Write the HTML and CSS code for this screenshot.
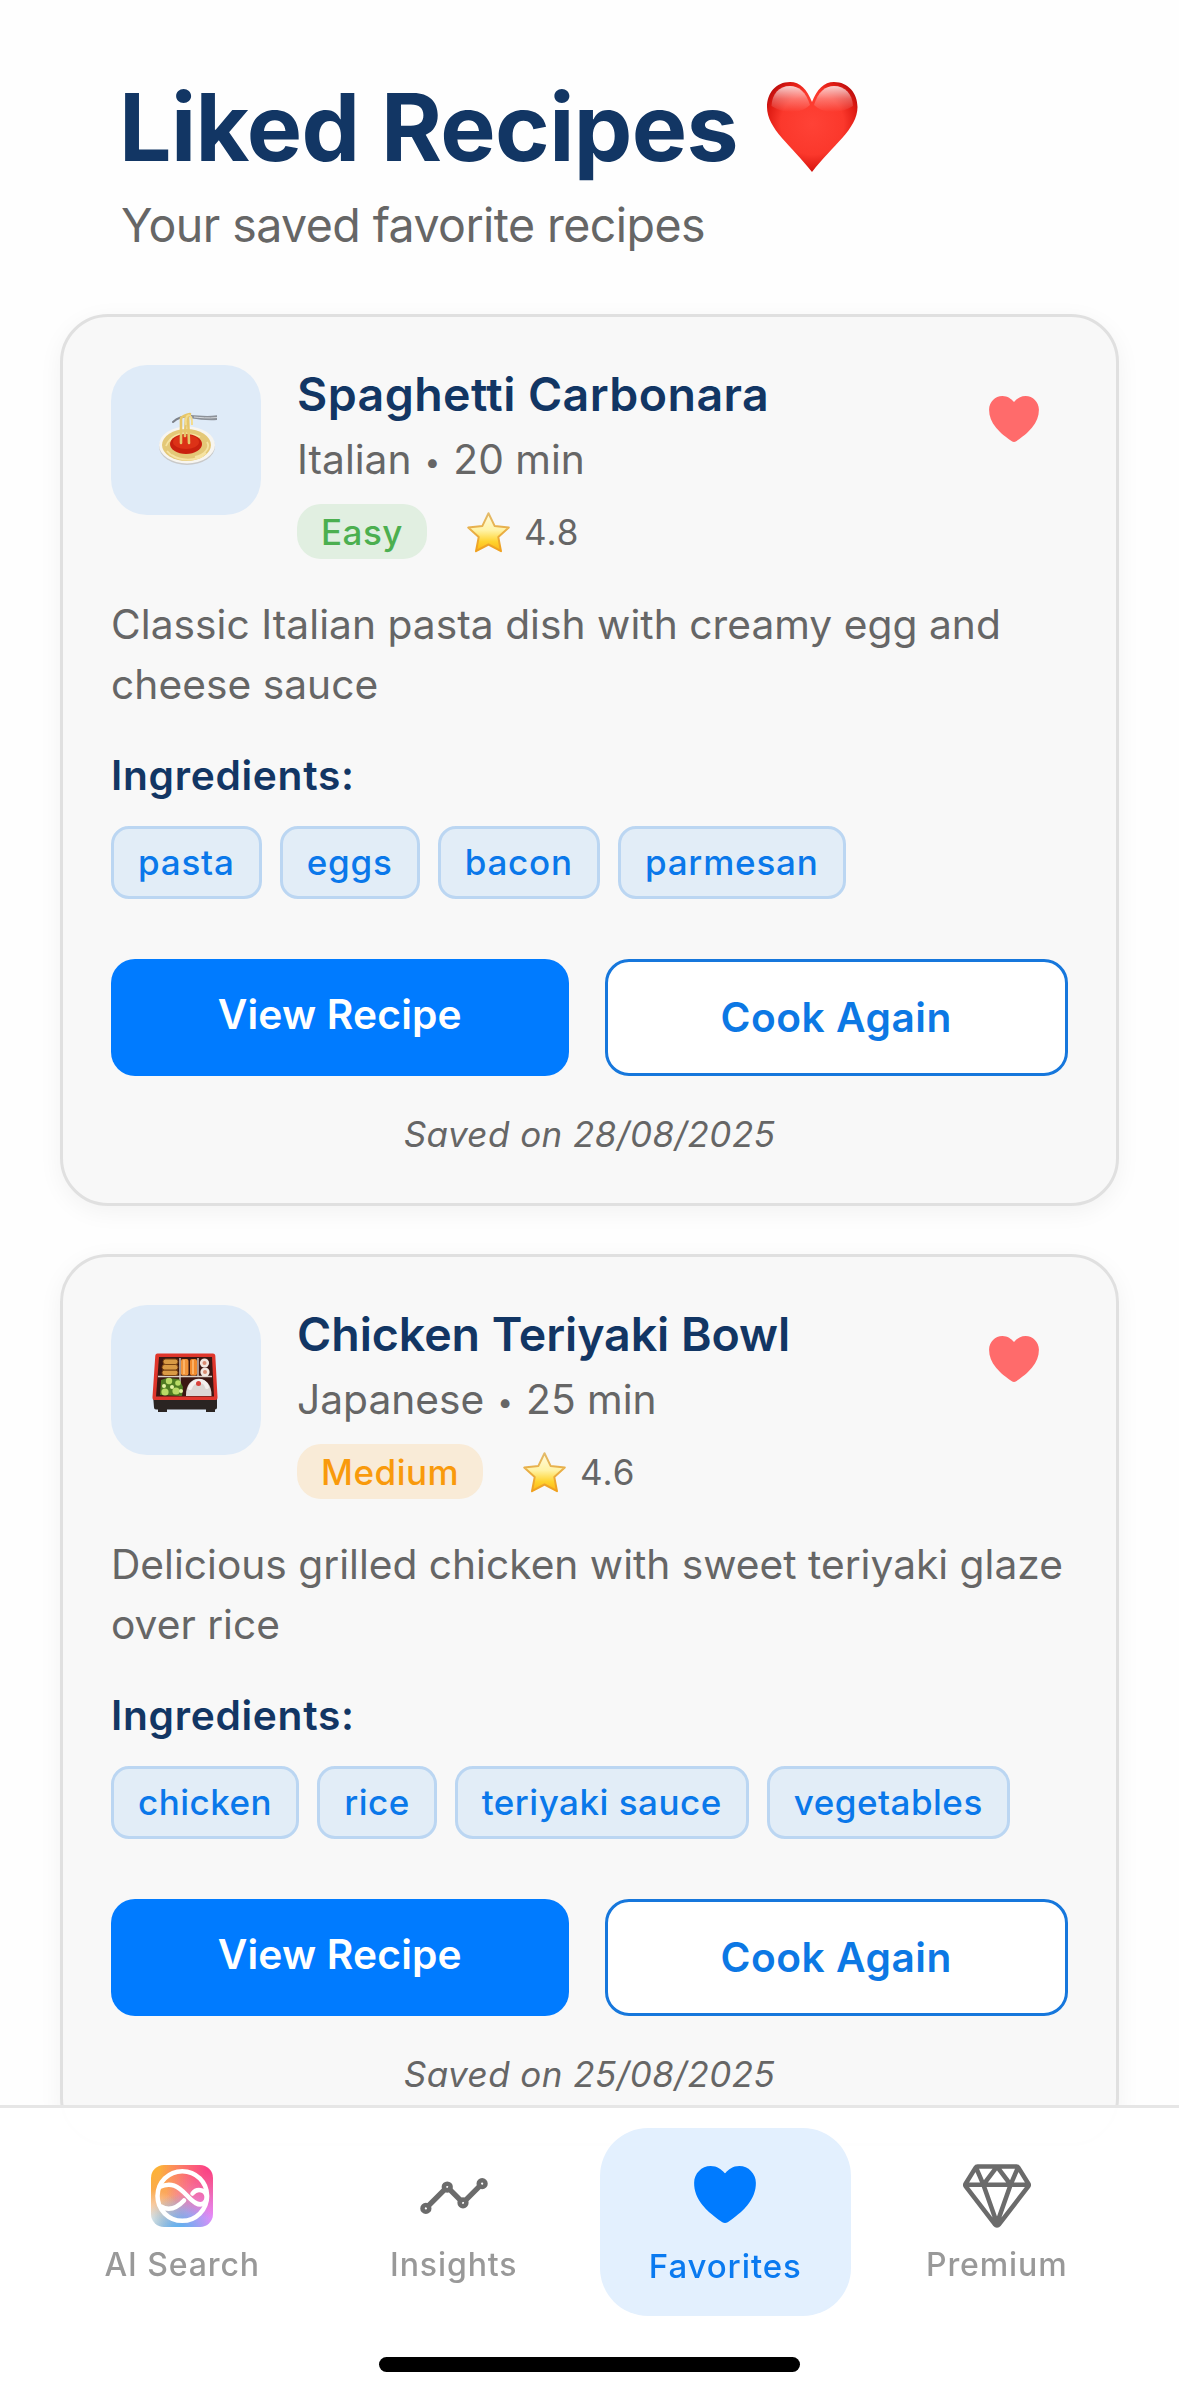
FILE: index.html
```html
<!DOCTYPE html>
<html lang="en">
<head>
<meta charset="utf-8">
<title>Liked Recipes</title>
<link rel="stylesheet" href="styles.css">
</head>
<body>
<svg class="defs" aria-hidden="true">
  <defs>
    <linearGradient id="starFill" x1="0" y1="0" x2="0" y2="1">
      <stop offset="0" stop-color="#fffbe0"/>
      <stop offset=".45" stop-color="#fff3a6"/>
      <stop offset=".75" stop-color="#ffd32e"/>
      <stop offset="1" stop-color="#fdb515"/>
    </linearGradient>
    <linearGradient id="starEdge" x1="0" y1="0" x2="0" y2="1">
      <stop offset="0" stop-color="#e3bb6a"/>
      <stop offset="1" stop-color="#f0a01c"/>
    </linearGradient>
    <radialGradient id="heartFill" cx=".5" cy=".46" r=".58">
      <stop offset="0" stop-color="#ff4236"/>
      <stop offset=".6" stop-color="#fb382c"/>
      <stop offset=".85" stop-color="#e01c14"/>
      <stop offset="1" stop-color="#b90c0c"/>
    </radialGradient>
    <linearGradient id="heartShine" x1="0" y1="0" x2="0" y2="1">
      <stop offset="0" stop-color="#fff" stop-opacity=".8"/>
      <stop offset=".5" stop-color="#fff" stop-opacity=".3"/>
      <stop offset="1" stop-color="#fff" stop-opacity="0"/>
    </linearGradient>
    <symbol id="star" viewBox="0 0 45 43">
      <path d="M22.500 2.200 28.600 14.900 42.800 16.600 32.300 26.100 35 40.200 22.500 33.500 10 40.200 12.700 26.100 2.200 16.600 16.400 14.900Z" fill="url(#starFill)" stroke="url(#starEdge)" stroke-width="2" stroke-linejoin="round"/>
    </symbol>
    <symbol id="heart" viewBox="48 64 416 384">
      <path d="M256 448a32 32 0 01-18-5.570c-78.590-53.350-112.620-89.930-131.390-112.800-40-48.750-59.150-98.800-58.610-153C48.630 114.520 98.460 64 159.080 64c44.080 0 74.610 24.830 92.390 45.510a6 6 0 009.060 0C278.310 88.810 308.840 64 352.920 64c60.620 0 110.450 50.520 111.080 112.640.540 54.210-18.630 104.260-58.610 153-18.770 22.870-52.800 59.450-131.390 112.800a32 32 0 01-18 5.560z" fill="currentColor"/>
    </symbol>
  </defs>
</svg>

<header class="header">
  <h1 class="title"><span>Liked Recipes</span>
    <svg class="title-heart" viewBox="12 13 91 90">
      <path d="M57 33C52 20 45 13 35 13 21 13 12 24 12 38 12 60 37 77 57 103 77 77 102.500 60 102.500 38 102.500 24 93 13 79 13 69 13 62 20 57 33Z" fill="url(#heartFill)"/>
      <path d="M55 36C51 23 44 17 35 17 24 17 17 25 16.500 37 28 45 46 45 55 36Z" fill="url(#heartShine)"/>
      <path d="M59 36C63 23 70 17 79 17 90 17 97.500 25 98 37 86 45 68 45 59 36Z" fill="url(#heartShine)"/>
    </svg>
  </h1>
  <p class="subtitle">Your saved favorite recipes</p>
</header>

<main class="list">
  <article class="card">
    <div class="card-top">
      <div class="thumb">
        <svg class="food" viewBox="-4 0 80 80">
          <ellipse cx="37" cy="46.500" rx="28" ry="18.500" fill="#c9c9c9"/>
          <ellipse cx="37" cy="45" rx="28" ry="18.500" fill="#f7f5f0"/>
          <ellipse cx="36.500" cy="45" rx="24.500" ry="16" fill="#e4c877"/>
          <path d="M16 46c4-10 14-13 21-13M17 51c8 10 28 12 39 2M20 42c6-8 20-10 30-5M57 42c4 6-3 13-12 15M22 55c9 6 22 6 31 1" fill="none" stroke="#f6e3a1" stroke-width="1.800"/>
          <ellipse cx="36" cy="44" rx="16" ry="10" fill="#c9210f"/>
          <ellipse cx="36" cy="42" rx="13" ry="7" fill="#dc3217"/>
          <path d="M41 15c6 0 14 2 26 .3V20c-10 .6-18-.5-25-1.500z" fill="#8c9199"/>
          <path d="M44 17c6 .5 14 1.500 23 .5" stroke="#d4d7db" stroke-width="1" fill="none"/>
          <path d="M23 22c4-4 9-6 18-6" stroke="#7c818a" stroke-width="2" fill="none" stroke-linecap="round"/>
          <path d="M31 43V18M35 36l1-20M39 43l-1-27M31 18c2-2 4-3 9-4" stroke="#e6c669" stroke-width="2.600" fill="none" stroke-linecap="round"/>
          <path d="M36 25c-2-12 7-14 6 0" stroke="#f4dc8c" stroke-width="2" fill="none"/>
        </svg>
      </div>
      <div class="info">
        <h2 class="name">Spaghetti Carbonara</h2>
        <p class="meta">Italian <span class="dot">•</span> 20 min</p>
        <div class="stats">
          <span class="badge badge-easy">Easy</span>
          <span class="rating"><svg class="star"><use href="#star"/></svg>4.8</span>
        </div>
      </div>
      <svg class="like"><use href="#heart"/></svg>
    </div>
    <p class="desc">Classic Italian pasta dish with creamy egg and cheese sauce</p>
    <h3 class="label">Ingredients:</h3>
    <div class="chips">
      <span class="chip">pasta</span><span class="chip">eggs</span><span class="chip">bacon</span><span class="chip">parmesan</span>
    </div>
    <div class="actions">
      <a class="btn btn-primary">View Recipe</a>
      <a class="btn btn-outline">Cook Again</a>
    </div>
    <p class="saved">Saved on 28/08/2025</p>
  </article>

  <article class="card">
    <div class="card-top">
      <div class="thumb">
        <svg class="food" viewBox="1 0 80 80">
          <path d="M8 55h64v12.500a2 2 0 0 1-2 2V72h-9v-2.500H22V72h-9v-2.500h-2a2 2 0 0 1-2-2z" fill="#2a2422"/>
          <path d="M12.500 13.500h55.500q2 0 2.300 2L72.500 57q.2 3-2 3h-61q-2.200 0-2-3l2.800-41.500q.2-2 2.200-2z" fill="#df352b"/>
          <path d="M14 17h53l2 39.500H11z" fill="#3b1712"/>
          <path d="M35 18v38M13 36.500h54M53 18v18" stroke="#d9cfc6" stroke-width="1.400"/>
          <g fill="#d99a45" stroke="#7b4312" stroke-width="1">
            <rect x="17" y="30" width="16" height="5.500" rx="2.700"/>
            <rect x="17" y="24.500" width="16" height="5.500" rx="2.700"/>
            <rect x="18" y="19" width="15" height="5.500" rx="2.700"/>
          </g>
          <rect x="36" y="19" width="7.500" height="16.500" rx="2" fill="#f1933a"/>
          <rect x="45" y="19" width="7" height="16.500" rx="2" fill="#f08a2d"/>
          <path d="M39 20v14M48 20v14" stroke="#ffc078" stroke-width="1.500"/>
          <g fill="#f2e7df"><circle cx="59.500" cy="23" r="4.600"/><circle cx="60" cy="32" r="4.600"/></g>
          <g fill="#d98c72"><circle cx="59.500" cy="23" r="2"/><circle cx="60" cy="32" r="2"/></g>
          <path d="M15 55l1-15 6-2 12 1 4 8-1 9z" fill="#4f7d22"/>
          <g fill="#b9da66"><circle cx="24" cy="41" r="3.200"/><circle cx="20" cy="52" r="3.600"/><circle cx="31" cy="51" r="3.600"/><circle cx="33" cy="43" r="2.800"/></g>
          <g fill="#e4f2a2"><circle cx="19" cy="46" r="2"/><circle cx="27" cy="47" r="2"/><circle cx="36" cy="51" r="2"/></g>
          <path d="M41 56c-1-23 26.500-23 25.500 0z" fill="#dcd7d4"/>
          <path d="M45 48c3-9 15-9 17-1" stroke="#f4f1ef" stroke-width="4" fill="none" stroke-linecap="round"/>
          <circle cx="53.500" cy="43.500" r="2.500" fill="#d9423a"/>
        </svg>
      </div>
      <div class="info">
        <h2 class="name name-long">Chicken Teriyaki Bowl</h2>
        <p class="meta">Japanese <span class="dot">•</span> 25 min</p>
        <div class="stats">
          <span class="badge badge-medium">Medium</span>
          <span class="rating"><svg class="star"><use href="#star"/></svg>4.6</span>
        </div>
      </div>
      <svg class="like"><use href="#heart"/></svg>
    </div>
    <p class="desc desc-long">Delicious grilled chicken with sweet teriyaki glaze over rice</p>
    <h3 class="label">Ingredients:</h3>
    <div class="chips chips-long">
      <span class="chip">chicken</span><span class="chip">rice</span><span class="chip">teriyaki sauce</span><span class="chip">vegetables</span>
    </div>
    <div class="actions">
      <a class="btn btn-primary">View Recipe</a>
      <a class="btn btn-outline">Cook Again</a>
    </div>
    <p class="saved">Saved on 25/08/2025</p>
  </article>
</main>

<nav class="tabbar">
  <div class="tabs">
    <a class="tab">
      <span class="tab-icon"><span class="ai-tile">
        <svg class="ai-mark" viewBox="0 0 62 62" fill="none" stroke="#fff" stroke-width="4.500" stroke-linecap="round">
          <circle cx="31.300" cy="31" r="24.800"/>
          <path d="M8.500 22C20 16.500 27 21 36 30.500 42 37 48 42 53 38 58.500 33 55 25 48 25 45 25 43 26.500 41.500 28.500"/>
          <path d="M10 41.500C18 46 26 43 33 35.500"/>
        </svg>
      </span></span>
      <span class="tab-label">AI Search</span>
    </a>
    <a class="tab">
      <span class="tab-icon">
        <svg class="ico-insights" viewBox="16 128 480 256" fill="none" stroke="currentColor" stroke-width="32" stroke-linecap="round">
          <circle cx="456" cy="168" r="24"/><circle cx="320" cy="304" r="24"/><circle cx="208" cy="192" r="24"/><circle cx="56" cy="344" r="24"/>
          <path d="M339 285l98-98M225 209l78 78M75 325l114-114" stroke-width="38"/>
        </svg>
      </span>
      <span class="tab-label">Insights</span>
    </a>
    <a class="tab tab-active">
      <span class="tab-icon"><svg class="ico-heart"><use href="#heart"/></svg></span>
      <span class="tab-label">Favorites</span>
    </a>
    <a class="tab">
      <span class="tab-icon">
        <svg class="ico-diamond" viewBox="16 32 480 448" fill="none" stroke="currentColor" stroke-width="32" stroke-linecap="round" stroke-linejoin="round">
          <path d="M35.420 188.210l207.750 269.460a16.170 16.170 0 0025.660 0l207.750-269.460a16.520 16.520 0 00.950-18.750L407.060 55.710A16.220 16.220 0 00393.270 48H118.730a16.220 16.220 0 00-13.790 7.710L34.470 169.460a16.520 16.520 0 00.950 18.750zM48 176h416M400 64l-48 112-96-128M112 64l48 112 96-128M256 448l-96-272M256 448l96-272"/>
        </svg>
      </span>
      <span class="tab-label">Premium</span>
    </a>
  </div>
  <div class="home-bar"></div>
</nav>
</body>
</html>
```
FILE: styles.css
```css
* {
  box-sizing: border-box;
  margin: 0;
  padding: 0;
}

body {
  background: #fefefe;
  color: #666;
  font-family: Inter, "Liberation Sans", sans-serif;
  height: 2396px;
  overflow: hidden;
}

svg {
  display: block;
  flex: none;
}

.defs {
  position: absolute;
  width: 0;
  height: 0;
}

/* Header */
.header {
  padding: 70px 119px 60px;
}

.title {
  display: flex;
  align-items: center;
  gap: 29px;
  color: #123664;
  font-size: 93px;
  font-weight: 700;
  line-height: 114px;
  letter-spacing: -0.62px;
}

.title-heart {
  width: 91px;
  height: 90px;
}

.subtitle {
  margin-top: 12px;
  padding-left: 2px;
  font-size: 46.5px;
  line-height: 58px;
  letter-spacing: -0.56px;
}

/* Recipe cards */
.list {
  display: flex;
  flex-direction: column;
  gap: 48px;
  padding: 0 60px;
}

.card {
  padding: 48px;
  background: #f8f8f8;
  border: 3px solid #e0e0e0;
  border-radius: 48px;
  box-shadow: 0 6px 24px rgba(0, 0, 0, 0.05);
}

.card-top {
  display: flex;
  align-items: flex-start;
}

.thumb {
  display: flex;
  flex: none;
  align-items: center;
  justify-content: center;
  width: 150px;
  height: 150px;
  margin-right: 36px;
  background: #dfebf8;
  border-radius: 36px;
}

.food {
  width: 80px;
  height: 80px;
}

.info {
  flex: 1;
}

.name {
  color: #123664;
  font-size: 46.5px;
  font-weight: 600;
  line-height: 58px;
  letter-spacing: 0.42px;
}

.name-long {
  letter-spacing: -0.05px;
}

.meta {
  margin-top: 12px;
  font-size: 40.7px;
  line-height: 50px;
}

.dot {
  display: inline-block;
  width: 19px;
  font-size: 28px;
  line-height: 1;
  text-align: center;
  vertical-align: 2px;
}

.stats {
  display: flex;
  align-items: center;
  gap: 39px;
  margin-top: 19px;
}

.badge {
  height: 55px;
  padding: 1px 24px 0;
  border-radius: 24px;
  font-size: 35px;
  font-weight: 500;
  line-height: 54px;
  letter-spacing: 0.5px;
}

.badge-easy {
  color: #4caf50;
  background: #e1efe1;
}

.badge-medium {
  color: #f99a0c;
  background: #f9ebd7;
}

.rating {
  display: flex;
  align-items: center;
  gap: 13px;
  padding-top: 1px;
  font-size: 35px;
  line-height: 54px;
  letter-spacing: 1px;
}

.star {
  width: 45px;
  height: 43px;
}

.like {
  width: 50px;
  height: 46px;
  margin: 31px 29px 0 0;
  color: #ff6b6b;
}

.desc {
  margin: 36px -10px 0 0;
  font-size: 40.7px;
  line-height: 60px;
  letter-spacing: 0.04px;
}

.desc-long {
  letter-spacing: 0;
}

.label {
  margin-top: 36px;
  color: #123664;
  font-size: 40.7px;
  font-weight: 600;
  line-height: 50px;
  letter-spacing: 0.7px;
}

.chips {
  display: flex;
  gap: 18px;
  margin-top: 25px;
  letter-spacing: 0.8px;
}

.chips-long {
  letter-spacing: 0.5px;
}

.chip {
  height: 73px;
  padding: 0 24px;
  color: #0a78ea;
  background: #e2edf7;
  border: 3px solid #bbd6f2;
  border-radius: 18px;
  font-size: 35px;
  font-weight: 500;
  line-height: 67px;
}

.actions {
  display: flex;
  gap: 36px;
  margin-top: 60px;
}

.btn {
  flex: 1 1 0;
  height: 117px;
  border-radius: 24px;
  font-size: 40.7px;
  font-weight: 600;
  text-align: center;
}

.btn-primary {
  color: #fff;
  background: #007bff;
  line-height: 111px;
  letter-spacing: 0.2px;
}

.btn-outline {
  color: #0c78e4;
  background: #fff;
  border: 3px solid #1677dc;
  line-height: 111px;
  letter-spacing: 0.5px;
}

.saved {
  margin-top: 37px;
  font-size: 35px;
  font-style: italic;
  line-height: 42px;
  letter-spacing: 0.45px;
  text-align: center;
}

/* Bottom tab bar */
.tabbar {
  position: fixed;
  right: 0;
  bottom: 0;
  left: 0;
  height: 291px;
  padding: 20px 57px 0;
  background: rgba(255, 255, 255, 0.95);
  background-clip: padding-box;
  border-top: 3px solid #e6e6e6;
}

.tabs {
  display: flex;
  gap: 21px;
}

.tab {
  display: flex;
  flex: 1 1 0;
  flex-direction: column;
  align-items: center;
  height: 188px;
  padding-top: 36px;
  border-radius: 48px;
  color: #6b6b6b;
}

.tab-icon {
  display: flex;
  align-items: center;
  justify-content: center;
  height: 64px;
}

.tab-label {
  margin-top: 17px;
  color: #999;
  font-size: 32px;
  font-weight: 500;
  line-height: 40px;
  letter-spacing: 0.9px;
}

.tab-active {
  color: #007bff;
  background: #e3f0fe;
}

.tab-active .tab-label {
  margin-top: 18px;
  color: #0a7af0;
  font-size: 33px;
}

.ai-tile {
  width: 62px;
  height: 62px;
  border-radius: 13px;
  background:
    radial-gradient(circle at 95% 5%, #fb3c86 0, rgba(251, 60, 134, 0) 60%),
    radial-gradient(circle at 45% 108%, #4db4f2 0, rgba(77, 180, 242, 0) 50%),
    radial-gradient(circle at 0 90%, #f5efe6 0, rgba(245, 239, 230, 0) 38%),
    radial-gradient(circle at 100% 85%, #e78bfb 0, rgba(231, 139, 251, 0) 65%),
    linear-gradient(135deg, #fcb42d 0, #fba36a 45%, #d59ce8 80%);
}

.ai-mark {
  width: 62px;
  height: 62px;
}

.ico-insights {
  width: 68px;
  height: 36px;
}

.ico-heart {
  width: 62px;
  height: 57px;
  margin-bottom: 3px;
}

.ico-diamond {
  width: 68px;
  height: 64px;
}

.home-bar {
  width: 421px;
  height: 15px;
  margin: 41px auto 0;
  background: #000;
  border-radius: 8px;
}
```
